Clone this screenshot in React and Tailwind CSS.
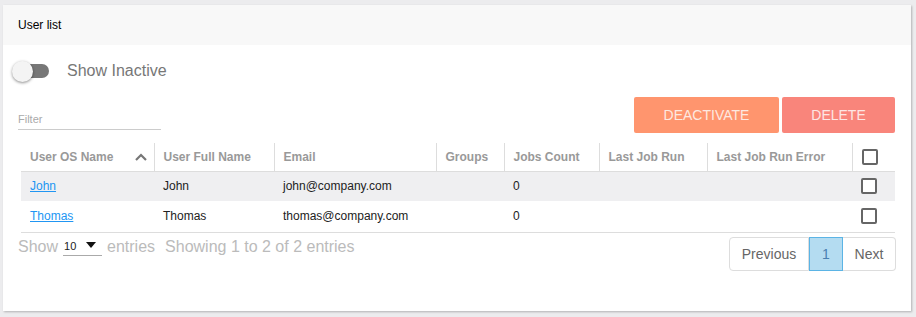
import React, { useState } from 'react';

const users = [
  { os: 'John', full: 'John', email: 'john@company.com', groups: '', jobs: '0', last: '', err: '' },
  { os: 'Thomas', full: 'Thomas', email: 'thomas@company.com', groups: '', jobs: '0', last: '', err: '' },
];

const cols = [
  { label: 'User OS Name', w: 'w-[133px]', sort: true },
  { label: 'User Full Name', w: 'w-[120px]' },
  { label: 'Email', w: 'w-[162px]' },
  { label: 'Groups', w: 'w-[68px]' },
  { label: 'Jobs Count', w: 'w-[95px]' },
  { label: 'Last Job Run', w: 'w-[108px]' },
  { label: 'Last Job Run Error', w: 'w-[145px]' },
];

const Checkbox = () => (
  <span className="block w-[16px] h-[16px] border-2 border-[#666] rounded-[2px] bg-white" />
);

const App = () => {
  const [showInactive, setShowInactive] = useState(false);

  return (
    <div className="min-h-screen bg-[#ececee] pt-[5px] pl-[3px] font-['Liberation_Sans',Arial,sans-serif]">
      <div className="w-[908px] h-[306px] bg-white shadow-[1px_1px_2px_rgba(0,0,0,0.25)]">
        {/* card header */}
        <div className="h-[40px] bg-[#f8f8f8] flex items-center pl-[15px] text-[12px] text-black">
          User list
        </div>

        <div className="pl-[9px]">
          {/* toggle */}
          <div className="mt-[15px] h-[22px] flex items-center">
            <button
              onClick={() => setShowInactive(!showInactive)}
              className="relative w-[37px] h-[22px] flex items-center"
            >
              <span className="absolute left-[2px] right-0 h-[14px] rounded-full bg-[#777]" />
              <span className="absolute left-0 w-[21px] h-[21px] rounded-full bg-[#f4f4f4] shadow-[0_1px_3px_rgba(0,0,0,0.45)]" />
            </button>
            <span className="ml-[18px] text-[16px] text-[#777]">Show Inactive</span>
          </div>

          {/* filter + actions */}
          <div className="mt-[15px] flex items-end justify-between pr-[16px] pl-[6px]">
            <div className="w-[143px] mb-[3px] border-b border-[#ccc] leading-[14px] pb-[3px]">
              <span className="text-[11px] text-[#aaa]">Filter</span>
            </div>
            <div className="flex gap-[3px]">
              <button className="w-[145px] h-[36px] rounded-[2px] bg-[#ff956e] text-[14px] text-[#fde8e0]">
                DEACTIVATE
              </button>
              <button className="w-[113px] h-[36px] rounded-[2px] bg-[#f9857b] text-[14px] text-[#fde6e4]">
                DELETE
              </button>
            </div>
          </div>

          {/* table */}
          <table className="mt-[10px] ml-[9px] w-[874px] table-fixed border-collapse text-[12px]">
            <thead>
              <tr className="h-[28px] border-b border-[#ddd]">
                {cols.map((c) => (
                  <th
                    key={c.label}
                    className={`${c.w} px-[9px] text-left font-bold text-[#999] border-r border-[#ddd]`}
                  >
                    <div className="flex items-center justify-between">
                      <span>{c.label}</span>
                      {c.sort && (
                        <svg width="12" height="8" viewBox="0 0 12 8" className="mr-[-2px]">
                          <polyline points="1,7 6,2 11,7" fill="none" stroke="#777" strokeWidth="2.2" />
                        </svg>
                      )}
                    </div>
                  </th>
                ))}
                <th className="px-[9px]">
                  <Checkbox />
                </th>
              </tr>
            </thead>
            <tbody>
              {users.map((u, i) => (
                <tr key={u.os} className={`h-[30px] ${i === 0 ? 'bg-[#efeff1]' : 'bg-white'}`}>
                  <td className="px-[9px]">
                    <a href="#" className="text-[#2196f3] underline">{u.os}</a>
                  </td>
                  <td className="px-[9px] text-[#222]">{u.full}</td>
                  <td className="px-[9px] text-[#222]">{u.email}</td>
                  <td className="px-[9px] text-[#222]">{u.groups}</td>
                  <td className="px-[9px] text-[#222]">{u.jobs}</td>
                  <td className="px-[9px] text-[#222]">{u.last}</td>
                  <td className="px-[9px] text-[#222]">{u.err}</td>
                  <td className="px-[9px]">
                    <Checkbox />
                  </td>
                </tr>
              ))}
            </tbody>
          </table>
          <div className="mt-[1px] ml-[9px] w-[874px] border-t border-[#ddd]" />

          {/* footer */}
          <div className="mt-[4px] flex items-start justify-between pl-[6px] pr-[15px]">
            <div className="flex items-center text-[16px] leading-[18px] text-[#bbb] pt-[1px]">
              <span>Show</span>
              <div className="ml-[5px] w-[39px] h-[17px] border-b border-[#aaa] flex items-end justify-between pb-[3px] pl-[1px] pr-[6px]">
                <span className="text-[11px] text-[#222] leading-none">10</span>
                <svg width="10" height="6" viewBox="0 0 10 6" className="mb-[4px]">
                  <polygon points="0,0 10,0 5,6" fill="#111" />
                </svg>
              </div>
              <span className="ml-[5px]">entries</span>
              <span className="ml-[10px]">Showing 1 to 2 of 2 entries</span>
            </div>
            <div className="flex h-[34px] text-[14px] text-[#666]">
              <span className="w-[80px] flex items-center justify-center border border-[#ddd] rounded-l-[4px]">
                Previous
              </span>
              <span className="w-[34px] flex items-center justify-center border border-[#5bb4e5] bg-[#b4dcf1] text-[#4a7fb0]">
                1
              </span>
              <span className="w-[53px] flex items-center justify-center border border-l-0 border-[#ddd] rounded-r-[4px]">
                Next
              </span>
            </div>
          </div>
        </div>
      </div>
    </div>
  );
};

export default App;
